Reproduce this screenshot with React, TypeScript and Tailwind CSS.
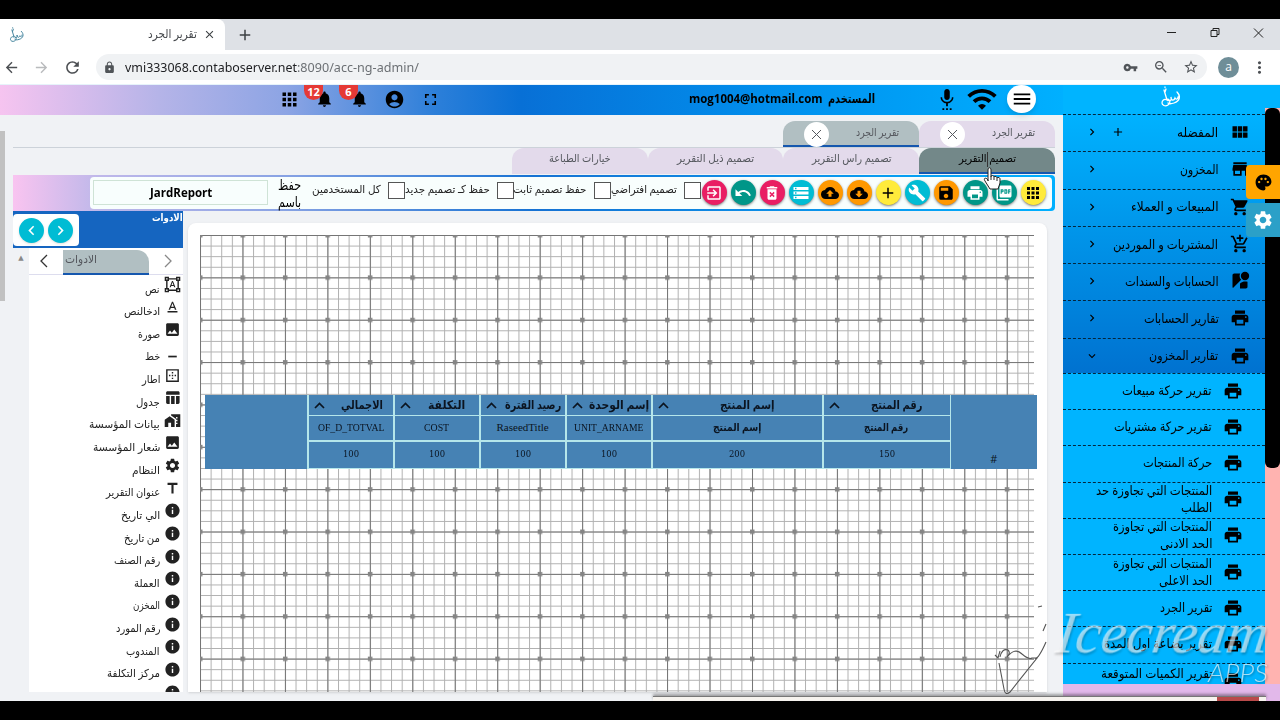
import React, { useLayoutEffect, useRef, useState } from 'react';
import {
  MdApps, MdNotifications, MdAccountCircle, MdFullscreen, MdSettingsVoice, MdWifi, MdMenu, MdClose,
  MdPictureAsPdf, MdPrint, MdSave, MdBuild, MdAdd, MdCloudDownload, MdCloudUpload, MdStorage,
  MdDeleteForever, MdUndo, MdExitToApp, MdChevronLeft, MdChevronRight, MdExpandMore,
  MdFormatShapes, MdTextFormat, MdImage, MdBorderOuter, MdTableChart, MdHomeWork, MdSettings,
  MdTitle, MdInfo, MdViewModule, MdStore, MdShoppingCart, MdAddShoppingCart, MdStreetview, MdPalette,
  MdArrowBack, MdArrowForward, MdRefresh, MdLock, MdVpnKey, MdZoomOut, MdStarBorder, MdMoreVert,
} from 'react-icons/md';

type Icon = React.ComponentType<{ className?: string }>;

interface FitProps {
  w: number;
  children: string;
  className?: string;
  ltr?: boolean;
}

// One line of text squeezed or stretched to a fixed width
function Fit({ w, children, className = '', ltr = false }: FitProps) {
  const ref = useRef<HTMLSpanElement>(null);
  const [scale, setScale] = useState(1);

  useLayoutEffect(() => {
    if (ref.current) setScale(w / ref.current.offsetWidth);
  }, [w, children]);

  return (
    <span dir={ltr ? 'ltr' : 'rtl'} className={`block shrink-0 whitespace-nowrap ${className}`} style={{ width: w }}>
      <span
        ref={ref}
        className={`inline-block ${ltr ? 'origin-left' : 'origin-right'}`}
        style={{ transform: `scaleX(${scale})` }}
      >
        {children}
      </span>
    </span>
  );
}

function Logo({ className = '' }: { className?: string }) {
  return (
    <svg viewBox="0 0 20 22" className={className} fill="none" stroke="currentColor" strokeWidth="1.3" strokeLinecap="round">
      <path d="M4 1v.5M3 4l3 10c-3-2-5 1-5 3s3 4 6 2 2-5 0-6M7 14c2 2 4 0 3-3 0 4 3 4 4 1 1 2 3 1 3-1M16 6c4 4 3 9-3 11-3 1-5 1-6 0M4 6l1-3" />
    </svg>
  );
}

function LineIcon({ className = '' }: { className?: string }) {
  return (
    <svg viewBox="0 0 16 16" className={className}>
      <rect x="4" y="11" width="8" height="1.6" fill="currentColor" />
    </svg>
  );
}

interface ToolButton {
  icon: Icon;
  color: string;
}

const toolButtons: ToolButton[] = [
  { icon: MdApps, color: 'bg-[#ffeb3b] text-black' },
  { icon: MdPictureAsPdf, color: 'bg-[#009688] text-white' },
  { icon: MdPrint, color: 'bg-[#009688] text-white' },
  { icon: MdSave, color: 'bg-[#ff9800] text-black' },
  { icon: MdBuild, color: 'bg-[#00bcd4] text-white' },
  { icon: MdAdd, color: 'bg-[#ffeb3b] text-black' },
  { icon: MdCloudDownload, color: 'bg-[#ff9800] text-black' },
  { icon: MdCloudUpload, color: 'bg-[#ff9800] text-black' },
  { icon: MdStorage, color: 'bg-[#00bcd4] text-white' },
  { icon: MdDeleteForever, color: 'bg-[#e91e63] text-white' },
  { icon: MdUndo, color: 'bg-[#009688] text-white' },
  { icon: MdExitToApp, color: 'bg-[#e91e63] text-white' },
];

const saveOptions = [
  { label: 'تصميم افتراضي', w: 66 },
  { label: 'حفظ تصميم ثابت', w: 73 },
  { label: 'حفظ كـ تصميم جديد', w: 85 },
  { label: 'كل المستخدمين', w: 69 },
];

const pageTabs = [
  { label: 'تقرير الجرد', active: false },
  { label: 'تقرير الجرد', active: true },
];

const designTabs = [
  { label: 'تصميم التقرير', w: 57, active: true },
  { label: 'تصميم راس التقرير', w: 80, active: false },
  { label: 'تصميم ذيل التقرير', w: 77, active: false },
  { label: 'خيارات الطباعة', w: 62, active: false },
];

const tools: { label: string; w: number; icon: Icon }[] = [
  { label: 'نص', w: 15, icon: MdFormatShapes },
  { label: 'ادخالنص', w: 36, icon: MdTextFormat },
  { label: 'صورة', w: 22, icon: MdImage },
  { label: 'خط', w: 15, icon: LineIcon },
  { label: 'اطار', w: 18, icon: MdBorderOuter },
  { label: 'جدول', w: 24, icon: MdTableChart },
  { label: 'بيانات المؤسسة', w: 71, icon: MdHomeWork },
  { label: 'شعار المؤسسة', w: 67, icon: MdImage },
  { label: 'النظام', w: 28, icon: MdSettings },
  { label: 'عنوان التقرير', w: 54, icon: MdTitle },
  { label: 'الي تاريخ', w: 39, icon: MdInfo },
  { label: 'من تاريخ', w: 36, icon: MdInfo },
  { label: 'رقم الصنف', w: 46, icon: MdInfo },
  { label: 'العملة', w: 26, icon: MdInfo },
  { label: 'المخزن', w: 27, icon: MdInfo },
  { label: 'رقم المورد', w: 44, icon: MdInfo },
  { label: 'المندوب', w: 34, icon: MdInfo },
  { label: 'مركز التكلفة', w: 53, icon: MdInfo },
];

const menu: { label: string; w: number; icon: Icon }[] = [
  { label: 'المفضله', w: 41, icon: MdViewModule },
  { label: 'المخزون', w: 38, icon: MdStore },
  { label: 'المبيعات و العملاء', w: 88, icon: MdShoppingCart },
  { label: 'المشتريات و الموردين', w: 105, icon: MdAddShoppingCart },
  { label: 'الحسابات والسندات', w: 94, icon: MdStreetview },
  { label: 'تقارير الحسابات', w: 75, icon: MdPrint },
  { label: 'تقارير المخزون', w: 69, icon: MdPrint },
];

const reports: { lines: [string, number][] }[] = [
  { lines: [['تقرير حركة مبيعات', 90]] },
  { lines: [['تقرير حركة مشتريات', 98]] },
  { lines: [['حركة المنتجات', 69]] },
  { lines: [['المنتجات التي تجاوزة حد', 116], ['الطلب', 31]] },
  { lines: [['المنتجات التي تجاوزة', 99], ['الحد الادنى', 52]] },
  { lines: [['المنتجات التي تجاوزة', 99], ['الحد الاعلى', 53]] },
  { lines: [['تقرير الجرد', 52]] },
  { lines: [['تقرير بضاعة اول المدة', 108]] },
];

const columns = [
  { title: 'رقم المنتج', tw: 51, pad: 'pr-[27px]', field: 'رقم المنتج', fw: 44, size: '150', width: 'w-[128px]', ltr: false },
  { title: 'إسم المنتج', tw: 55, pad: 'pr-[47px]', field: 'إسم المنتج', fw: 48, size: '200', width: 'w-[171px]', ltr: false },
  { title: 'إسم الوحدة', tw: 60, pad: 'pr-px', field: 'UNIT_ARNAME', fw: 69, size: '100', width: 'w-[86px]', ltr: true },
  { title: 'رصيد الفترة', tw: 56, pad: 'pr-[3px]', field: 'RaseedTitle', fw: 52, size: '100', width: 'w-[86px]', ltr: true },
  { title: 'التكلفة', tw: 37, pad: 'pr-[13px]', field: 'COST', fw: 25, size: '100', width: 'w-[86px]', ltr: true },
  { title: 'الاجمالي', tw: 42, pad: 'pr-[10px]', field: 'OF_D_TOTVAL', fw: 66, size: '100', width: 'w-[86px]', ltr: true },
];

function Browser() {
  return (
    <div className="shrink-0">
      <div className="flex h-[31px] items-center bg-[#dee1e6]">
        <div className="flex h-full w-[225px] items-center rounded-tr-lg bg-white pl-[9px] pr-[9px]">
          <Logo className="h-4 w-4 text-[#3b7f99]" />
          <Fit w={49} className="ml-auto pb-px text-[12px] text-[#45484c]">تقرير الجرد</Fit>
          <MdClose className="ml-1.5 h-[13px] w-[13px] text-[#3c4043]" />
        </div>
        <MdAdd className="ml-[11px] h-[18px] w-[18px] text-[#3c4043]" />
        <svg className="ml-auto mr-[14px] h-4 w-[100px] text-[#222]" viewBox="0 0 100 16" fill="none" stroke="currentColor">
          <path d="M1 5.5h9M45 3.5h6v6h-6zM47 3.500v-2h6v6h-2M88 1.500l9 9M97 1.500l-9 9" />
        </svg>
      </div>
      <div className="flex h-[34px] items-center bg-white">
        <MdArrowBack className="ml-[3px] h-[17px] w-[17px] text-[#4c4f53]" />
        <MdArrowForward className="ml-[13px] h-[17px] w-[17px] text-[#b9bbbd]" />
        <MdRefresh className="ml-[13px] h-[19px] w-[19px] text-[#4c4f53]" />
        <div className="ml-[14px] flex h-[26px] flex-1 items-center rounded-full bg-[#f0f2f4] pl-[7px] pr-2 text-[#505458]">
          <MdLock className="h-[13px] w-[13px]" />
          <span dir="ltr" className="ml-[9px] flex pt-px font-['Noto_Sans','Open_Sans',sans-serif] text-[13px] text-[#6c7074]">
            <Fit ltr w={172} className="text-[#202124]">vmi333068.contaboserver.net</Fit>
            <Fit ltr w={122}>:8090/acc-ng-admin/</Fit>
          </span>
          <MdVpnKey className="ml-auto h-[15px] w-[15px]" />
          <MdZoomOut className="ml-[15px] h-4 w-4" />
          <MdStarBorder className="ml-[14px] h-4 w-4" />
        </div>
        <div className="ml-[11px] flex h-[21px] w-[21px] items-center justify-center rounded-full bg-[#6f8e98] text-xs text-white">a</div>
        <MdMoreVert className="ml-[11px] mr-[11px] h-[19px] w-[19px] text-[#4c4f53]" />
      </div>
    </div>
  );
}

function Bell({ count }: { count: string }) {
  return (
    <div className="relative h-[20px] w-[19px]">
      <MdNotifications className="h-[20px] w-[19px]" />
      <span className="absolute -left-[11px] -top-[4px] flex h-[15px] w-[19px] items-center justify-center rounded-b-full rounded-t-[4px] bg-[#e53935] text-[11px] font-bold leading-none text-white">
        <span className="-translate-y-px leading-[10px]">{count}</span>
      </span>
    </div>
  );
}

function Header() {
  return (
    <div dir="rtl" className="flex h-[30px] shrink-0 items-center bg-[linear-gradient(90deg,#f6c4f0_0%,#b5b4e8_15%,#8ca4e4_27%,#2c7fd9_41%,#0870d6_49%,#0092ef_75%,#00b0ff_100%)] pb-[2px] text-black">
      <div className="mr-[27px] flex h-[28px] w-[29px] items-center justify-center rounded-full bg-white shadow-md">
        <MdMenu className="h-[22px] w-[22px]" />
      </div>
      <MdWifi className="mr-[9px] h-[32px] w-[32px]" />
      <MdSettingsVoice className="mr-[8px] h-[22px] w-[22px]" />
      <Fit w={47} className="mr-[61px] text-[13px] font-bold">المستخدم</Fit>
      <Fit ltr w={134} className="mr-[5px] text-[13px] font-bold">mog1004@hotmail.com</Fit>
      <div className="mr-auto flex items-center pl-[279px]">
        <MdFullscreen className="h-[19px] w-[19px]" />
        <MdAccountCircle className="mr-[16px] h-[21px] w-[21px]" />
        <div className="mr-[15px]"><Bell count="6" /></div>
        <div className="mr-[16px]"><Bell count="12" /></div>
        <MdApps className="mr-[15px] h-[21px] w-[21px]" />
      </div>
    </div>
  );
}

function PageTabs() {
  return (
    <div dir="rtl" className="shrink-0 pl-[13px] pr-[8px] pt-[6px]">
      <div className="flex h-[27px] border-b border-[#ccd2d9] text-[11px] text-[#55585e]">
        {pageTabs.map((tab, i) => (
          <div
            key={i}
            className={`flex h-[26px] w-[136px] items-center justify-between rounded-t-xl pl-[21px] pr-[20px] ${
              tab.active ? 'bg-[#b1bfc2] shadow-[inset_0_-2px_0_#1557ae]' : 'bg-[#e3daeb]'
            }`}
          >
            <Fit w={43} className="pb-[3px]">{tab.label}</Fit>
            <div className="flex h-[25px] w-[25px] items-center justify-center rounded-full bg-white">
              <svg className="h-[11px] w-[11px]" viewBox="0 0 11 11" stroke="currentColor"><path d="M1 1l9 9M10 1l-9 9" /></svg>
            </div>
          </div>
        ))}
      </div>
      <div className="flex h-[27px] text-[11px]">
        {designTabs.map((tab) => (
          <div
            key={tab.label}
            className={`flex h-[26px] w-[135.8px] items-center justify-center rounded-t-xl pb-[5px] ${
              tab.active ? 'bg-[#738889] text-black shadow-[inset_0_-2px_0_#1557ae]' : 'bg-[#e3daeb] text-[#55585e]'
            }`}
          >
            <Fit w={tab.w}>{tab.label}</Fit>
          </div>
        ))}
      </div>
    </div>
  );
}

function Toolbar() {
  return (
    <div dir="rtl" className="ml-[13px] mr-[8px] h-[36px] shrink-0 rounded-r bg-[linear-gradient(90deg,#f9c4f0_0%,#c0b8ea_8%,#8ca4e4_25%,#1672d3_50%,#00b0ff_100%)] py-[2px] pl-[77px] pr-[3px]">
      <div className="flex h-full items-center rounded bg-[#f8fefd] pb-px pr-[6.5px]">
        <div className="flex gap-[4px]">
          {toolButtons.map(({ icon: ToolIcon, color }, i) => (
            <div key={i} className={`flex h-[25px] w-[25px] items-center justify-center rounded-full shadow-sm shadow-black/40 ${color}`}>
              <ToolIcon className="h-[18px] w-[18px]" />
            </div>
          ))}
        </div>
        <div className="mr-[1px] flex items-center pb-[5px] text-[11px] font-medium text-[#222]">
          {saveOptions.map((o) => (
            <div key={o.label} className="flex items-center">
              <span className="h-[17px] w-[17px] border border-[#555] bg-white" />
              <Fit w={o.w} className="mr-[7px] pb-[2px]">{o.label}</Fit>
            </div>
          ))}
        </div>
        <div className="mr-[10px] flex w-[24px] flex-col text-[14px] leading-[17px] text-black">
          <Fit w={23}>حفظ</Fit>
          <Fit w={23}>باسم</Fit>
        </div>
        <div className="ml-[3px] mr-auto flex h-[25px] w-[175px] items-center justify-center border border-[#cfe3d6]">
          <Fit ltr w={62} className="text-[13px] font-bold">JardReport</Fit>
        </div>
      </div>
    </div>
  );
}

function ToolsPanel() {
  return (
    <div className="flex w-[170px] shrink-0 flex-col">
      <div className="flex h-[37px] shrink-0 justify-between bg-[#1565c0]">
        <div className="mt-[3px] flex h-[32px] w-[66px] items-center justify-center gap-[4px] rounded bg-white">
          <div className="flex h-[25px] w-[25px] items-center justify-center rounded-full bg-[#00bcd4] text-white shadow">
            <MdChevronLeft className="h-[19px] w-[19px]" />
          </div>
          <div className="flex h-[25px] w-[25px] items-center justify-center rounded-full bg-[#00bcd4] text-white shadow">
            <MdChevronRight className="h-[19px] w-[19px]" />
          </div>
        </div>
        <Fit w={31} className="text-[10px] font-bold leading-[13px] text-white">الادوات</Fit>
      </div>
      <div className="flex min-h-0 flex-1">
        <div className="flex w-[16px] shrink-0 justify-center pt-[6px] text-[7px] leading-none text-[#888]">▲</div>
        <div className="flex min-w-0 flex-1 flex-col overflow-hidden bg-white">
          <div className="flex h-[27px] shrink-0 items-center border-b border-[#dde] text-[#333]">
            <svg className="ml-[10px] h-[14px] w-[9px]" fill="none" stroke="currentColor" strokeWidth="1.3"><path d="M8 1L2 7l6 6" /></svg>
            <div className="ml-[15px] mt-[2px] flex h-[25px] w-[86px] items-center rounded-tr-xl border-b-2 border-[#1557ae] bg-[#b1bfc2] pb-[3px] pl-[2px] text-[11px] text-[#55585e]">
              <Fit w={32}>الادوات</Fit>
            </div>
            <svg className="ml-[15px] h-[14px] w-[9px] text-[#888]" fill="none" stroke="currentColor" strokeWidth="1.3"><path d="M1 1l6 6-6 6" /></svg>
          </div>
          <div dir="rtl" className="pr-[2px] text-[11px] text-[#222]">
            {tools.map(({ label, w, icon: ToolIcon }) => (
              <div key={label} className="flex h-[22.65px] items-start">
                <ToolIcon className="h-[17px] w-[17px] shrink-0 translate-y-px" />
                <Fit w={w} className="mr-[4px] mt-[4.500px] leading-[17px]">{label}</Fit>
              </div>
            ))}
            <MdInfo className="h-[17px] w-[17px] translate-y-px" />
          </div>
        </div>
      </div>
    </div>
  );
}

function Grid() {
  return (
    <svg className="absolute left-[12px] top-[12px] h-[457px] w-[834px]">
      <defs>
        <pattern id="minor" width="10.615" height="10.59" patternUnits="userSpaceOnUse">
          <path d="M10.615 .5H.5V10.59" fill="none" stroke="#b0b0b0" strokeWidth="1" />
        </pattern>
        <pattern id="major" width="42.46" height="42.36" patternUnits="userSpaceOnUse">
          <path d="M42.46 .5H.5V42.36" fill="none" stroke="#757575" strokeWidth="1" />
          <path d="M0 0h2.500v2.500H0zM40.500 0h2v2.500h-2zM0 40.350h2.500v2H0zM40.500 40.350h2v2h-2z" fill="#858585" />
        </pattern>
      </defs>
      <rect width="100%" height="100%" fill="url(#minor)" />
      <rect width="100%" height="100%" fill="url(#major)" />
    </svg>
  );
}

function ReportTable() {
  return (
    <div dir="rtl" className="absolute left-[17px] top-[172px] flex h-[74px] w-[832px] bg-[#4682b4] text-[#0b1420]">
      <div className="flex w-[87.5px] items-end justify-center border-l border-[#b5e6ea] pb-[2px] text-[11px]">#</div>
      {columns.map((c, i) => (
        <div key={i} className={`flex flex-col border-l-2 border-[#b5e6ea] ${c.width}`}>
          <div className={`flex h-[21px] items-center justify-between border-b border-[#b5e6ea] pl-[5px] ${c.pad}`}>
            <Fit w={c.tw} className="pb-px text-[12px] font-bold">{c.title}</Fit>
            <svg className="h-[7px] w-[11px] shrink-0" fill="none" stroke="currentColor" strokeWidth="1.7"><path d="M1 6l4.500-4.500L10 6" /></svg>
          </div>
          <div className="flex h-[26px] items-center justify-center border-b-2 border-[#b5e6ea] pb-[2px]">
            <Fit ltr={c.ltr} w={c.fw} className={c.ltr ? "font-['Liberation_Serif','DejaVu_Serif',serif] text-[11px]" : 'text-[11px] font-bold'}>
              {c.field}
            </Fit>
          </div>
          <div className="flex flex-1 items-center justify-center border-b border-[#b5e6ea] pb-px">
            <Fit ltr w={16} className="font-['DejaVu_Serif',serif] text-[9.500px]">{c.size}</Fit>
          </div>
        </div>
      ))}
    </div>
  );
}

function Sidebar() {
  return (
    <div dir="rtl" className="flex h-[599px] w-[202px] shrink-0 flex-col overflow-hidden bg-[#00b4ff] text-black">
      <div className="flex h-[29px] shrink-0 items-center pb-[5px] pr-[83px]">
        <Logo className="h-[22px] w-[22px] text-white" />
      </div>
      <div className="h-[259px] shrink-0 bg-[linear-gradient(180deg,#00b2ff,#0072d0)] text-[13px]">
        {menu.map(({ label, w, icon: MenuIcon }, i) => (
          <div key={label} className="flex h-[37.25px] items-center border-t border-dashed border-[#04263d] pr-[15px]">
            <MenuIcon className="h-[20px] w-[20px] shrink-0 -translate-y-px" />
            <Fit w={w} className="mr-[11.500px] pb-px">{label}</Fit>
            <div className="ml-[22px] mr-auto flex items-center gap-[12px] pb-[2px]">
              {i === 0 && <MdAdd className="h-[14px] w-[14px]" />}
              {i === 6 ? <MdExpandMore className="h-[14px] w-[14px]" /> : <MdChevronRight className="h-[14px] w-[14px]" />}
            </div>
          </div>
        ))}
      </div>
      <div className="text-[13px]">
        {reports.map((r, i) => (
          <div key={i} className="flex h-[36.2px] items-center border-t border-dashed border-[#04263d] pb-[2px] pr-[22px]">
            <MdPrint className="h-[20px] w-[20px] shrink-0" />
            <div className="mr-[11px] flex flex-col leading-[17px]">
              {r.lines.map(([text, w]) => <Fit key={text} w={w}>{text}</Fit>)}
            </div>
          </div>
        ))}
        <div className="flex h-[36px] items-start border-t border-dashed border-[#04263d] pr-[22px]">
          <MdPrint className="mt-[7px] h-[20px] w-[20px] shrink-0" />
          <Fit w={111} className="mr-[11px] leading-[18px]">تقرير الكميات المتوقعة</Fit>
        </div>
      </div>
    </div>
  );
}

function Cursor() {
  return (
    <svg className="absolute left-[982px] top-[152px] h-[38px] w-[20px]" viewBox="0 0 20 38" fill="#fff" stroke="#222" strokeLinejoin="round">
      <path d="M5.500 0v15" stroke="#333" />
      <path d="M6 29V18c0-3 3-3 3 0v7c0-2 3-2 3 0 0-1 3-1 3 1 0-1 3-1 3 1v4l-2 6H8l-5-8c-2-3 1-4 3-1z" />
      <path d="M9 25v3M12 25v3M15 26v3" fill="none" />
    </svg>
  );
}

function Watermark() {
  return (
    <div dir="ltr" className="absolute left-[992px] top-[600px] h-[98px] w-[284px]">
      <svg className="absolute left-0 top-0 h-[98px] w-[70px]" fill="none" stroke="#555" strokeWidth="1.1">
        <path d="M3 55l3 3 2-7M8 57q2-9 8-7 3 3-1 7q8-10 15-3 7 6 10 4h5L18 92q-5 4-6-3L7 63" />
        <path d="M43 59q4-1 11-17M51 31l3-7M46 7l4-1" />
      </svg>
      <span className="absolute left-[65px] top-0 -skew-x-[8deg] text-white/60 drop-shadow-[1px_2px_1px_rgba(0,0,0,0.4)]">
        <Fit ltr w={212} className="font-['Liberation_Serif',serif] text-[58px] italic leading-[66px]">Icecream</Fit>
      </span>
      <span className="absolute left-[216px] top-[58px] text-white/65 drop-shadow-[1px_1px_1px_rgba(0,0,0,0.5)]">
        <Fit ltr w={60} className="font-['Lato',sans-serif] text-[26px] font-light italic leading-[28px]">APPS</Fit>
      </span>
    </div>
  );
}

export default function App() {
  return (
    <div className="relative flex h-[720px] w-[1280px] flex-col overflow-hidden bg-black pt-[19px] font-['Open_Sans','DejaVu_Sans',sans-serif]">
      <Browser />
      <div className="h-px shrink-0 bg-[#e6f3fa]" />
      <div className="flex h-[616px] shrink-0 bg-[#f0f2f5]">
        <div className="flex w-[1063px] flex-col">
          <Header />
          <div className="flex min-h-0 flex-1 flex-col">
            <PageTabs />
            <Toolbar />
            <div className="flex h-[481px]">
              {/* Page scroll bar */}
              <div className="-mt-[80px] h-[170px] w-[5px] shrink-0 bg-[#c1c1c1]" />
              <div className="w-[8px] shrink-0" />
              <ToolsPanel />
              <div className="relative ml-[5px] mt-[12px] w-[859px] overflow-hidden rounded-t-lg bg-white shadow">
                <Grid />
                <ReportTable />
              </div>
            </div>
            <div className="h-[10px] shrink-0" />
          </div>
        </div>
        <div className="flex flex-col bg-[#e2b8ea]">
          <Sidebar />
        </div>
        <div className="flex flex-1 flex-col bg-[#e2b8ea]">
          <div className="h-[23px] shrink-0 bg-[#00b4ff]" />
          <div className="h-[576px] shrink-0 bg-[#ffb3b0]">
            <div className="h-[360px] rounded-md bg-black" />
          </div>
        </div>
      </div>

      {/* Floating theme and settings buttons */}
      <div className="absolute left-[1246px] top-[165px] flex h-[34px] w-[34px] items-center justify-center rounded-l bg-[#ffa500]">
        <MdPalette className="h-[19px] w-[19px]" />
      </div>
      <div className="absolute left-[1246px] top-[203px] flex h-[34px] w-[34px] items-center justify-center rounded-l bg-[#2ba0c8] text-white">
        <MdSettings className="h-[22px] w-[22px]" />
      </div>

      <Cursor />
      <Watermark />
      <div className="absolute left-[653px] top-[696px] flex h-[5px] w-[613px] justify-end border-t border-[#777] bg-[#f6f3ee] pr-[7px] shadow-[0_-2px_3px_rgba(0,0,0,0.35)]">
        <div className="h-full w-[42px] bg-[#b94a4a]" />
      </div>
      <div className="absolute left-0 top-[701px] h-[19px] w-full bg-black" />
    </div>
  );
}
